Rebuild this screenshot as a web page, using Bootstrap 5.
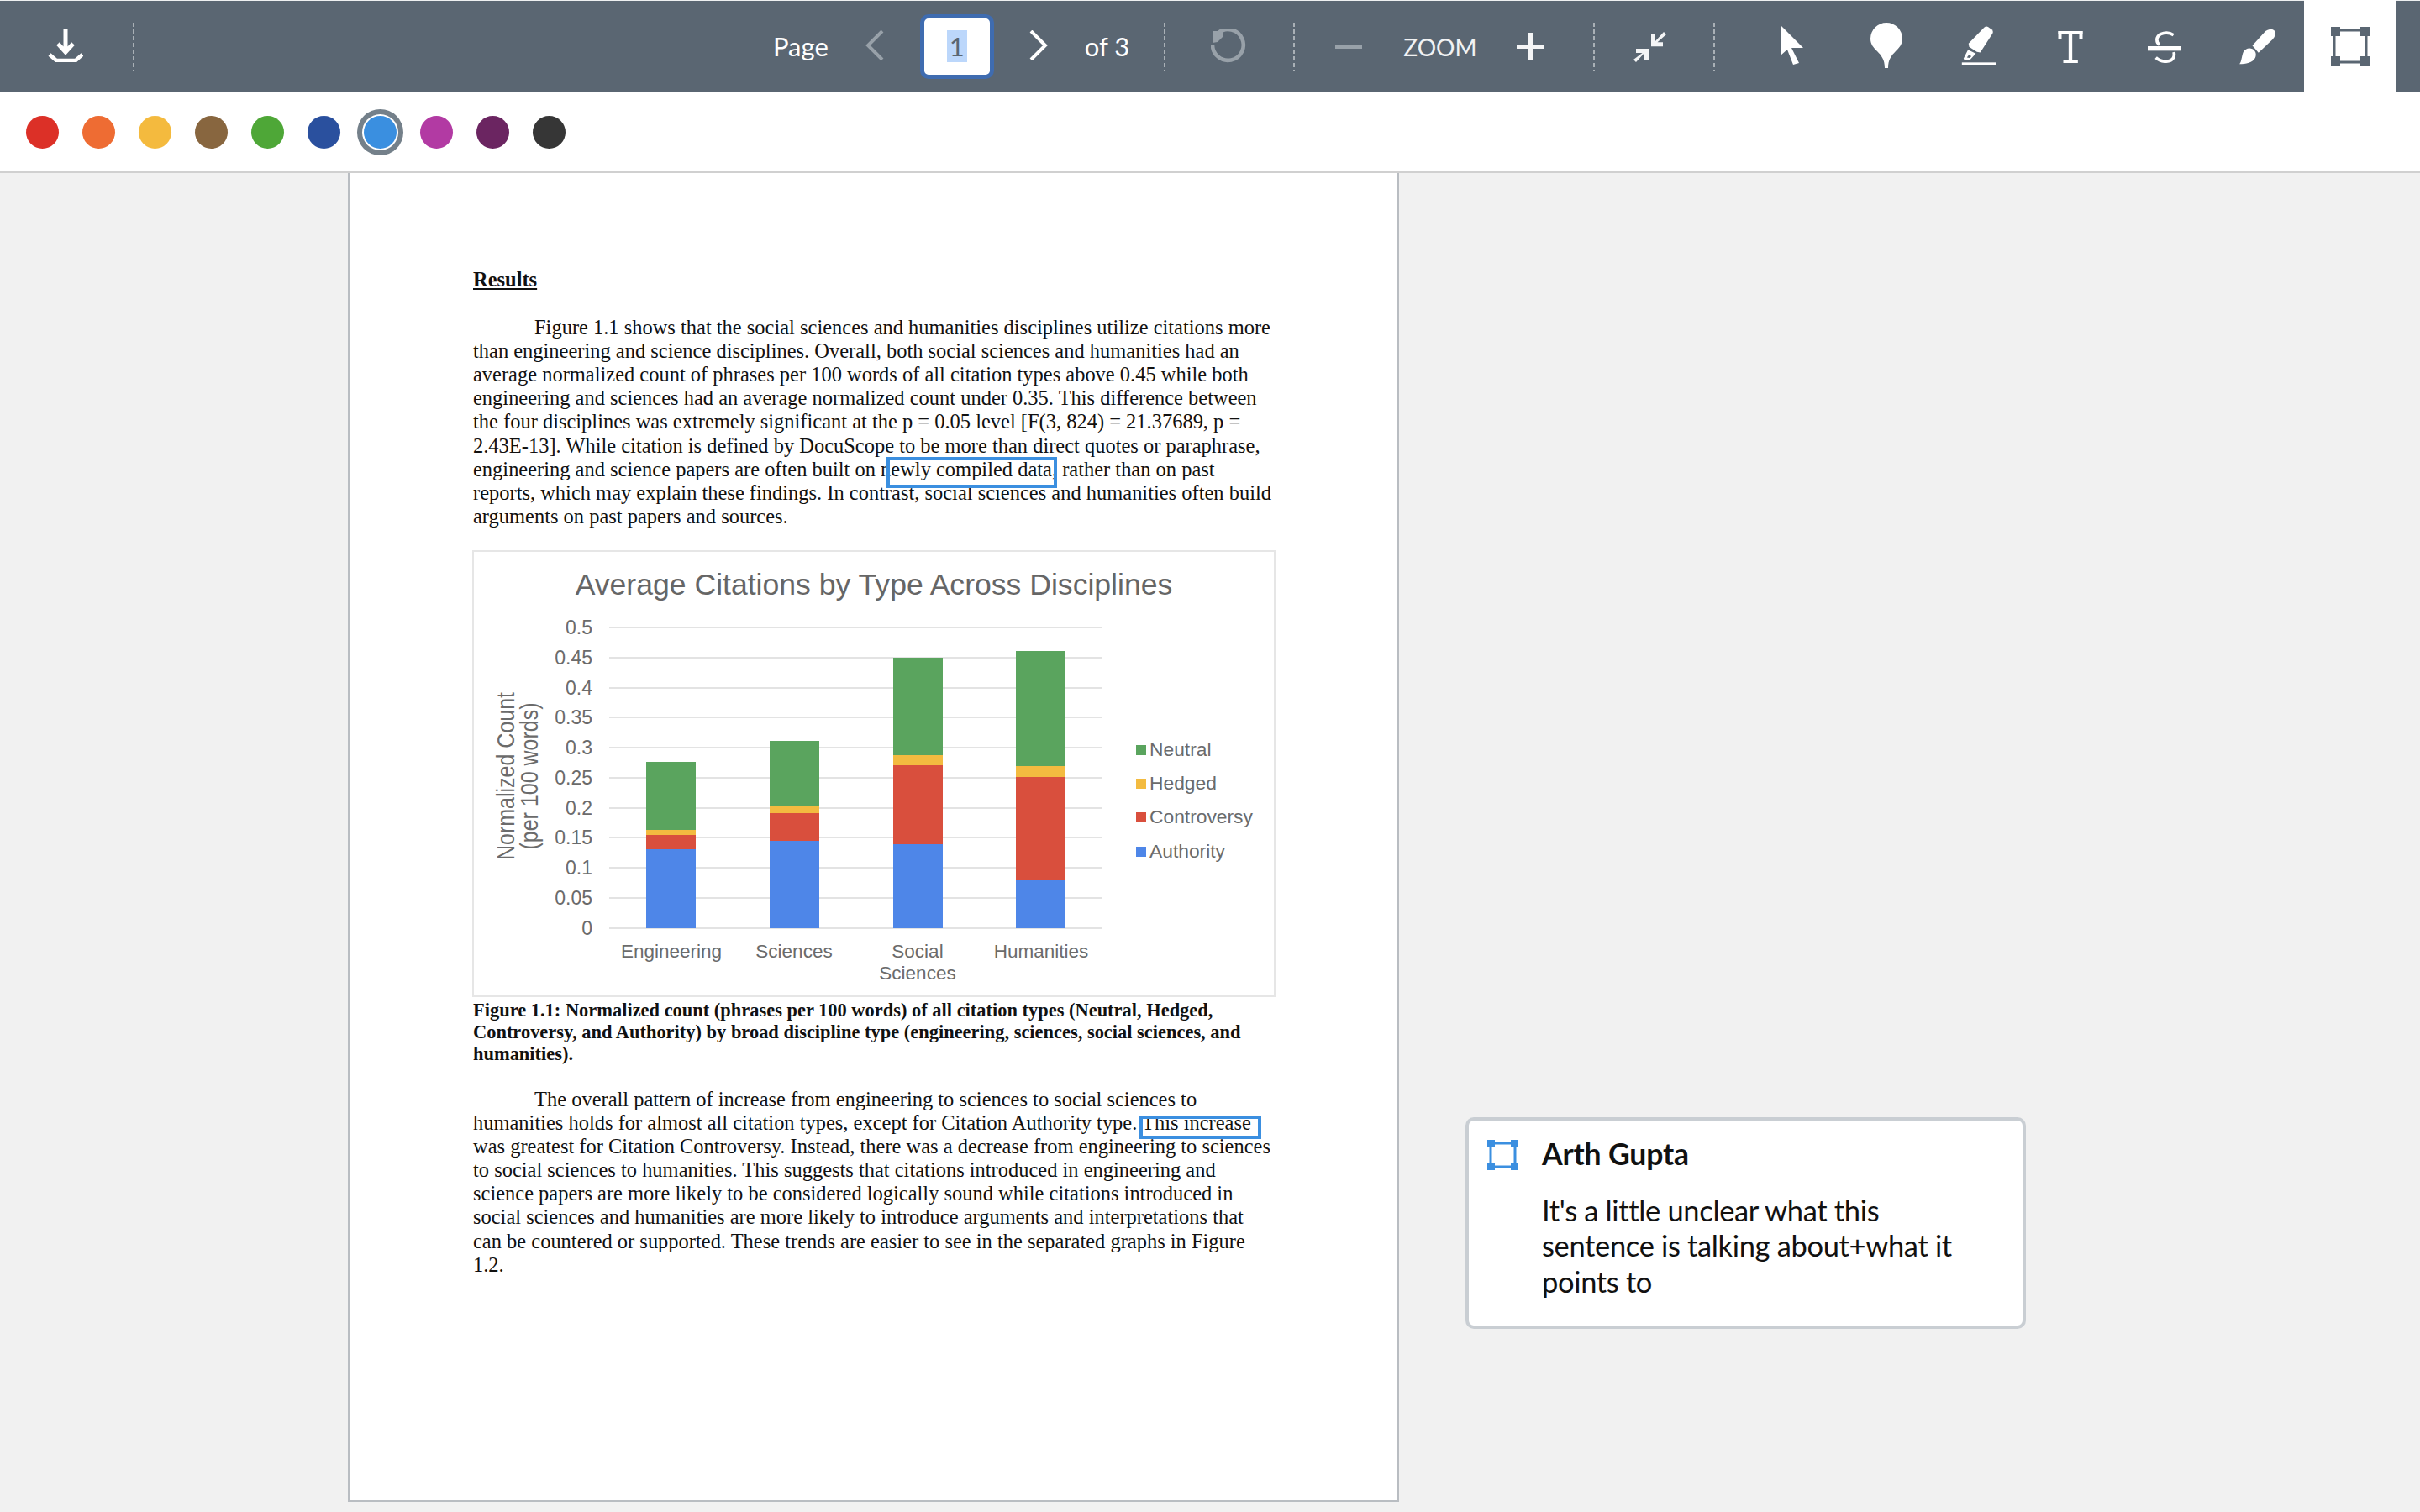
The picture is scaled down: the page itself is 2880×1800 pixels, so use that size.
<!DOCTYPE html>
<html lang="en">
<head>
<meta charset="UTF-8">
<title>Annotated document</title>
<link rel="stylesheet" href="https://cdn.jsdelivr.net/npm/bootstrap@5.3.0/dist/css/bootstrap.min.css">
<style>
  body { background: #f1f1f1; font-family: "Lato", sans-serif; width: 2880px; height: 1800px; overflow: hidden; }

  /* top toolbar */
  .tool-bar { height: 110px; background: #5a6672; border-top: 1px solid #eef0f1; color: #fff; font-size: 31px; }
  .tool-bar svg { display: block; flex: none; }
  .tool-rule { width: 2px; height: 58px; flex: none; background: repeating-linear-gradient(to bottom, #a9b0b6 0 5px, transparent 5px 8px); }
  .nudge-up { margin-top: -4px; }
  .ml-dl { margin-left: 57px; }
  .ml-r1 { margin-left: 59px; }
  .ml-page { margin-left: 760px; }
  .ml-prev { margin-left: 44px; }
  .ml-input { margin-left: 43px; }
  .ml-next { margin-left: 42px; }
  .ml-of { margin-left: 44px; }
  .ml-r2 { margin-left: 41px; }
  .ml-rot { margin-left: 54px; }
  .ml-r3 { margin-left: 54px; }
  .ml-minus { margin-left: 48px; }
  .ml-zoom { margin-left: 49px; }
  .ml-plus { margin-left: 48px; }
  .ml-r4 { margin-left: 58px; }
  .ml-comp { margin-left: 46px; }
  .ml-r5 { margin-left: 54px; }
  .ml-cur { margin-left: 78px; }
  .ml-pin { margin-left: 78px; }
  .ml-hl { margin-left: 69px; }
  .ml-t { margin-left: 72px; }
  .ml-s { margin-left: 76px; }
  .ml-br { margin-left: 69px; }
  .page-box { width: 88px; height: 77px; margin-top: -1px; border: 5px solid #3f6cb0; border-radius: 10px; background: #fff; color: #5a6672; flex: none; }
  .page-box span { background: #bcd7fb; line-height: 38px; padding: 0 3px; }
  .zoom-word { font-size: 28px; line-height: 1; color: #f1f2f3; }
  .tool-on { width: 110px; height: 110px; margin-left: 34px; margin-top: -1px; background: #fff; flex: none; }

  /* colour strip */
  .swatch-bar { height: 96px; background: #fff; border-bottom: 2px solid #d0d0d0; padding-left: 31px; gap: 28px; }
  .dot { width: 39px; height: 39px; border-radius: 50%; flex: none; }
  .dot-on { box-shadow: 0 0 0 2px #fff, 0 0 0 8px #74808a; }
  .dot-red { background: #dc3027; }
  .dot-orange { background: #ee6c33; }
  .dot-yellow { background: #f4ba3e; }
  .dot-brown { background: #88663f; }
  .dot-green { background: #4ea737; }
  .dot-navy { background: #2a509e; }
  .dot-blue { background: #3a8fe0; }
  .dot-magenta { background: #b23aa3; }
  .dot-purple { background: #6b2561; }
  .dot-dark { background: #363636; }

  /* document page */
  .work-area { height: 1594px; }
  .doc-sheet { position: relative; width: 1251px; height: 1582px; margin-left: 414px; background: #fff; border: 2px solid #b9bdc2; border-top: 0; padding: 113px 0 0 147px; font-family: "Liberation Serif", serif; font-size: 24.48px; line-height: 28.1px; color: #111; flex: none; }
  .doc-head { font-weight: 700; text-decoration: underline; margin-bottom: 29px; }
  .doc-para { white-space: nowrap; margin: 0; }
  .doc-indent { display: inline-block; width: 73px; }
  .chart-box { display: block; width: 956px; height: 532px; margin: 26px 0 3px -1px; border: 2px solid #e6e6e6; font-family: "Liberation Sans", sans-serif; }
  .doc-caption { font-weight: 700; font-size: 22.45px; line-height: 26px; white-space: nowrap; margin-bottom: 27px; }
  .mark-box { position: absolute; border: 4px solid #3b8fe0; }
  .mark-one { left: 639px; top: 338px; width: 203px; height: 37px; }
  .mark-two { left: 940px; top: 1122px; width: 145px; height: 28px; }

  /* comment card */
  .note-card { width: 667px; height: 252px; margin: 1124px 0 0 79px; background: #fff; border: 4px solid #c9ced3; border-radius: 10px; padding: 23px 0 0 22px; gap: 28px; flex: none; color: #111; }
  .note-name { font-weight: 700; font-size: 35.5px; line-height: 42px; letter-spacing: -.15px; margin-top: -4px; margin-bottom: 25px; }
  .note-text { font-size: 34.5px; line-height: 42.3px; letter-spacing: -.35px; white-space: nowrap; }
</style>
</head>
<body>

<div class="tool-bar d-flex align-items-center">
  <svg class="ml-dl nudge-up" width="42" height="40" viewBox="57 33 42 40" fill="none" stroke="#fff"><path stroke-width="5" d="M78 34V61M69 51l9 10 9-10"/><path stroke-width="4.5" d="M59 64l8 7h23l8-7"/></svg>
  <div class="tool-rule ml-r1"></div>
  <div class="ml-page">Page</div>
  <svg class="ml-prev nudge-up" width="22" height="36" viewBox="0 0 22 36" fill="none" stroke="#98a1a9" stroke-width="4"><path d="M20 1L3 18l17 17"/></svg>
  <div class="page-box ml-input d-flex align-items-center justify-content-center"><span>1</span></div>
  <svg class="ml-next nudge-up" width="22" height="36" viewBox="0 0 22 36" fill="none" stroke="#fff" stroke-width="4"><path d="M2 1l17 17L2 35"/></svg>
  <div class="ml-of">of 3</div>
  <div class="tool-rule ml-r2"></div>
  <svg class="ml-rot" width="44" height="44" viewBox="1441 33 44 44"><path fill="none" stroke="#98a1a9" stroke-width="4.6" d="M1450 38a18.4 18.4 0 1 1-7 14"/><path fill="#98a1a9" d="M1443 36h13v6l-7 7-6 1z"/></svg>
  <div class="tool-rule ml-r3"></div>
  <svg class="ml-minus" width="32" height="5" viewBox="0 0 32 5"><rect width="32" height="5" fill="#98a1a9"/></svg>
  <div class="zoom-word ml-zoom">ZOOM</div>
  <svg class="ml-plus" width="33" height="33" viewBox="0 0 33 33" fill="#f4f5f6"><rect y="14" width="33" height="5"/><rect x="14" width="5" height="33"/></svg>
  <div class="tool-rule ml-r4"></div>
  <svg class="ml-comp" width="41" height="38" viewBox="1944 36 41 38" fill="#f4f5f6"><path d="M1965 39h5v9l10-11 3 3-10.500 9.300h6.500v5h-14z"/><path d="M1947 57h15v14h-5v-9l-10 11-3-3 10.500-8h-7.500z"/></svg>
  <div class="tool-rule ml-r5"></div>
  <svg class="ml-cur nudge-up" width="28" height="47" viewBox="2120 30 28 47" fill="#fff"><path d="M2120 30l27 27h-14l9 18-7 2-7-18-8 7z"/></svg>
  <svg class="ml-pin nudge-up" width="40" height="54" viewBox="2225 28 40 54" fill="#fff"><path d="M2226 47a19 19 0 1 1 38 0c0 7-4 11-8 15-5 5-9 10-9 20h-4c0-10-4-15-9-20-4-4-8-8-8-15z"/></svg>
  <svg class="ml-hl nudge-up" width="42" height="46" viewBox="42 65 122 139" fill="#fff"><path d="M122 70q7-5 14-2l14 10q6 6 2 14l-44 68-12-2-28-18-2-12z"/><path fill-rule="evenodd" d="M64 150l-16 32 4 6 20-2 20-22zM60 178l8-10 8 6-6 6z"/><rect x="42" y="196" width="122" height="8"/></svg>
  <svg class="ml-t" width="32" height="38" viewBox="390 78 87 114" fill="#fff"><rect x="390" y="78" width="87" height="12"/><rect x="390" y="78" width="12" height="27"/><rect x="465" y="78" width="12" height="27"/><rect x="427" y="78" width="13" height="110"/><rect x="408" y="182" width="52" height="10"/></svg>
  <svg class="ml-s" width="40" height="38" viewBox="708 78 120 114" fill="none" stroke="#fff" stroke-width="11"><path d="M800 92c-12-8-30-10-46-3-18 10-16 30-4 38"/><path d="M801 153c4 16-2 30-22 33-14 2-30-2-42-13"/><rect x="708" y="132" width="120" height="16" fill="#fff" stroke="none"/></svg>
  <svg class="ml-br" width="43" height="42" viewBox="72 72 128 126" fill="#fff"><path d="M118 130l47-52q12-8 24-6 13 4 11 18-2 10-10 18l-50 47z"/><path d="M72 196c8-10 8-30 14-44 6-10 20-16 32-10 12 6 16 20 10 32-8 16-34 22-56 22z"/></svg>
  <div class="tool-on d-flex align-items-center justify-content-center">
    <svg width="46" height="46" viewBox="0 0 46 46"><rect x="4" y="4" width="38" height="38" fill="none" stroke="#5a6672" stroke-width="3"/><g fill="#5a6672"><rect width="11" height="11"/><rect x="35" width="11" height="11"/><rect y="35" width="11" height="11"/><rect x="35" y="35" width="11" height="11"/></g></svg>
  </div>
</div>

<div class="swatch-bar d-flex align-items-center">
  <div class="dot dot-red"></div>
  <div class="dot dot-orange"></div>
  <div class="dot dot-yellow"></div>
  <div class="dot dot-brown"></div>
  <div class="dot dot-green"></div>
  <div class="dot dot-navy"></div>
  <div class="dot dot-blue dot-on"></div>
  <div class="dot dot-magenta"></div>
  <div class="dot dot-purple"></div>
  <div class="dot dot-dark"></div>
</div>

<div class="work-area d-flex align-items-start">
  <div class="doc-sheet">
    <div class="doc-head">Results</div>
    <p class="doc-para"><span class="doc-indent"></span>Figure 1.1 shows that the social sciences and humanities disciplines utilize citations more<br>
    than engineering and science disciplines. Overall, both social sciences and humanities had an<br>
    average normalized count of phrases per 100 words of all citation types above 0.45 while both<br>
    engineering and sciences had an average normalized count under 0.35. This difference between<br>
    the four disciplines was extremely significant at the p = 0.05 level [F(3, 824) = 21.37689, p =<br>
    2.43E-13]. While citation is defined by DocuScope to be more than direct quotes or paraphrase,<br>
    engineering and science papers are often built on newly compiled data, rather than on past<br>
    reports, which may explain these findings. In contrast, social sciences and humanities often build<br>
    arguments on past papers and sources.</p>

    <svg class="chart-box" viewBox="564 657 952 528">
      <g stroke="#e3e3e3" stroke-width="2">
        <path d="M725 747H1312M725 783H1312M725 819H1312M725 854H1312M725 890H1312M725 926H1312M725 962H1312M725 997H1312M725 1033H1312M725 1069H1312M725 1105H1312"/>
      </g>
      <g fill="#6b6b6b" font-size="23" text-anchor="end">
        <text x="705" y="755">0.5</text><text x="705" y="791">0.45</text><text x="705" y="827">0.4</text><text x="705" y="862">0.35</text><text x="705" y="898">0.3</text><text x="705" y="934">0.25</text><text x="705" y="970">0.2</text><text x="705" y="1005">0.15</text><text x="705" y="1041">0.1</text><text x="705" y="1077">0.05</text><text x="705" y="1113">0</text>
      </g>
      <!-- stacks: authority, controversy, hedged, neutral -->
      <g fill="#4e86e8"><rect x="769" y="1011" width="59" height="94"/><rect x="916" y="1001" width="59" height="104"/><rect x="1063" y="1005" width="59" height="100"/><rect x="1209" y="1048" width="59" height="57"/></g>
      <g fill="#d94f3d"><rect x="769" y="994" width="59" height="17"/><rect x="916" y="968" width="59" height="33"/><rect x="1063" y="911" width="59" height="94"/><rect x="1209" y="925" width="59" height="123"/></g>
      <g fill="#f3bb40"><rect x="769" y="988" width="59" height="6"/><rect x="916" y="959" width="59" height="9"/><rect x="1063" y="899" width="59" height="12"/><rect x="1209" y="912" width="59" height="13"/></g>
      <g fill="#5aa45e"><rect x="769" y="907" width="59" height="81"/><rect x="916" y="882" width="59" height="77"/><rect x="1063" y="783" width="59" height="116"/><rect x="1209" y="775" width="59" height="137"/></g>
      <text x="1040" y="708" fill="#666" font-size="35.600" text-anchor="middle">Average Citations by Type Across Disciplines</text>
      <g fill="#6b6b6b" font-size="25" text-anchor="middle">
        <text transform="translate(612 924) rotate(-90) scale(1 1.2)">Normalized Count</text>
        <text transform="translate(640 924) rotate(-90) scale(1 1.2)">(per 100 words)</text>
      </g>
      <g fill="#6b6b6b" font-size="22.500" text-anchor="middle">
        <text x="799" y="1140">Engineering</text><text x="945" y="1140">Sciences</text><text x="1092" y="1140">Social</text><text x="1092" y="1166">Sciences</text><text x="1239" y="1140">Humanities</text>
      </g>
      <rect x="1352" y="887" width="12" height="12" fill="#5aa45e"/><rect x="1352" y="927" width="12" height="12" fill="#f3bb40"/><rect x="1352" y="967" width="12" height="12" fill="#d94f3d"/><rect x="1352" y="1008" width="12" height="12" fill="#4e86e8"/>
      <g fill="#6b6b6b" font-size="22.800">
        <text x="1368" y="900">Neutral</text><text x="1368" y="940">Hedged</text><text x="1368" y="980">Controversy</text><text x="1368" y="1021">Authority</text>
      </g>
    </svg>

    <div class="doc-caption">Figure 1.1: Normalized count (phrases per 100 words) of all citation types (Neutral, Hedged,<br>
    Controversy, and Authority) by broad discipline type (engineering, sciences, social sciences, and<br>
    humanities).</div>

    <p class="doc-para"><span class="doc-indent"></span>The overall pattern of increase from engineering to sciences to social sciences to<br>
    humanities holds for almost all citation types, except for Citation Authority type. This increase<br>
    was greatest for Citation Controversy. Instead, there was a decrease from engineering to sciences<br>
    to social sciences to humanities. This suggests that citations introduced in engineering and<br>
    science papers are more likely to be considered logically sound while citations introduced in<br>
    social sciences and humanities are more likely to introduce arguments and interpretations that<br>
    can be countered or supported. These trends are easier to see in the separated graphs in Figure<br>
    1.2.</p>

    <div class="mark-box mark-one"></div>
    <div class="mark-box mark-two"></div>
  </div>

  <div class="note-card d-flex align-items-start">
    <svg class="flex-shrink-0" width="37" height="36" viewBox="0 0 37 36"><rect x="4" y="4" width="29" height="28" fill="none" stroke="#3b8fe0" stroke-width="3"/><g fill="#3b8fe0"><rect width="9" height="9"/><rect x="28" width="9" height="9"/><rect y="27" width="9" height="9"/><rect x="28" y="27" width="9" height="9"/></g></svg>
    <div>
      <div class="note-name">Arth Gupta</div>
      <div class="note-text">It's a little unclear what this<br>sentence is talking about+what it<br>points to</div>
    </div>
  </div>
</div>

<script src="https://cdn.jsdelivr.net/npm/bootstrap@5.3.0/dist/js/bootstrap.bundle.min.js"></script>
</body>
</html>
